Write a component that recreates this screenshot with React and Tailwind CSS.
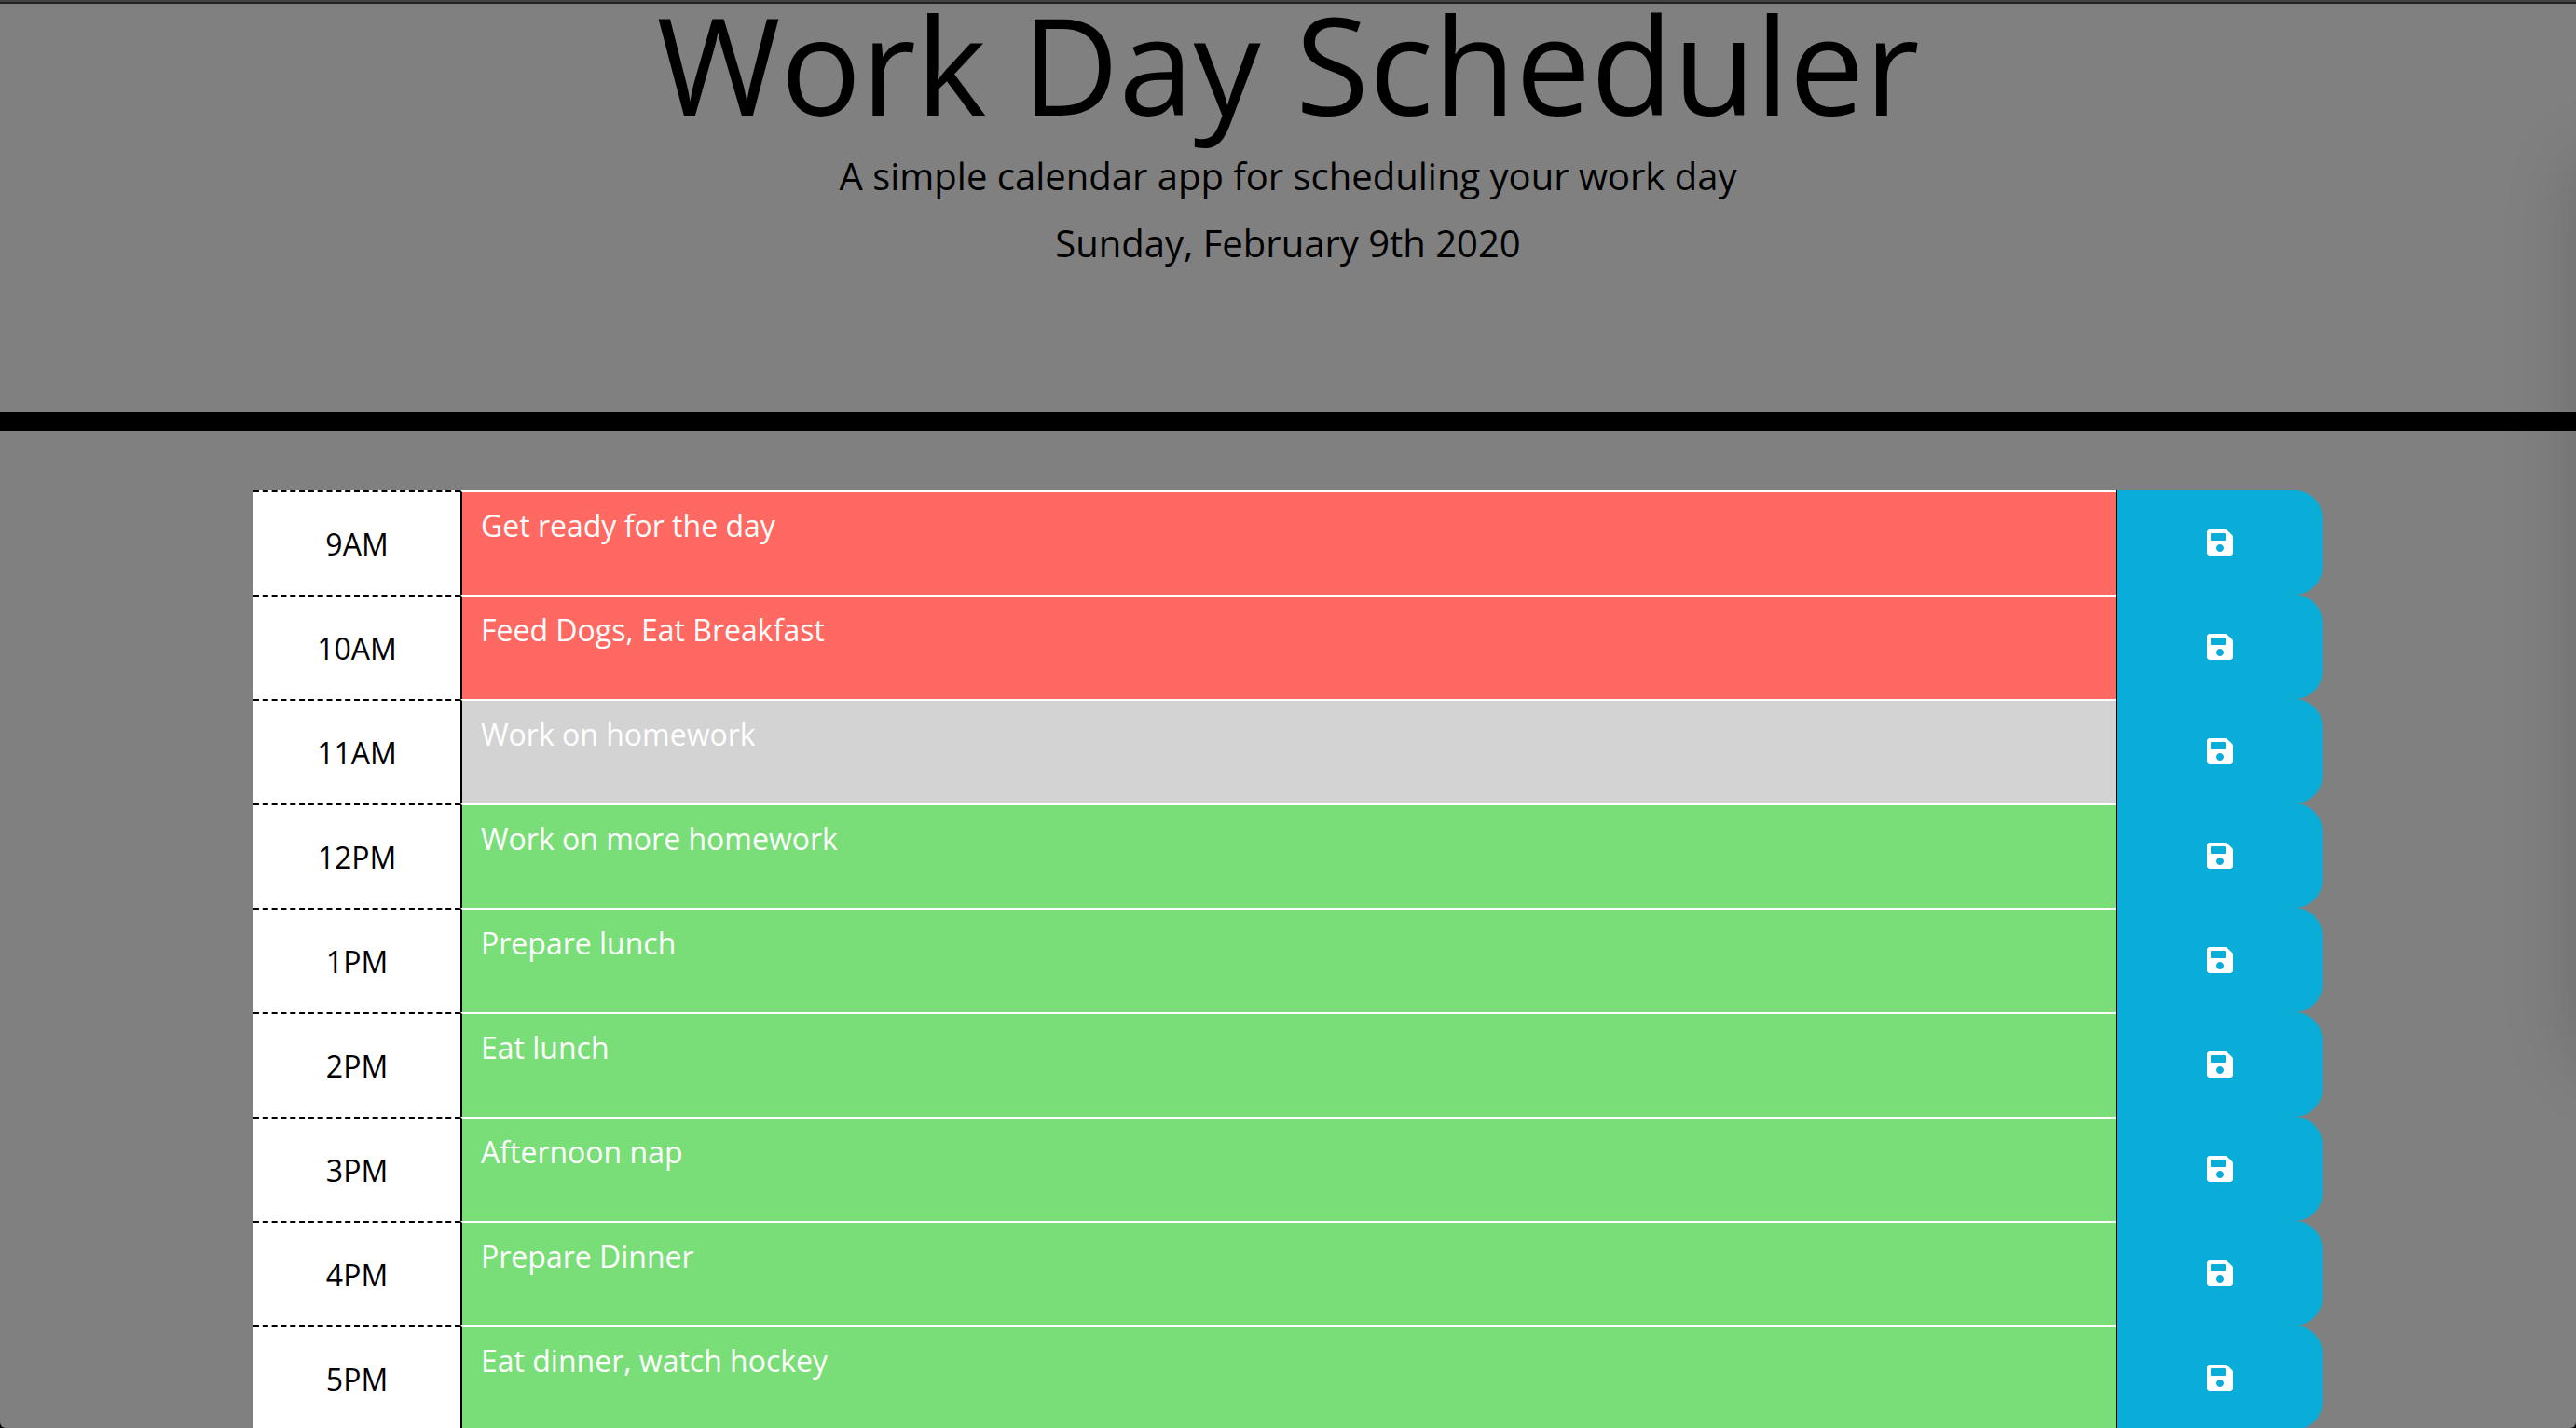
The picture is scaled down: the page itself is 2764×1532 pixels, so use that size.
import { useState } from "react";
import { FaSave } from "react-icons/fa";

const PAST = "bg-[#ff6961]";
const PRESENT = "bg-[#d3d3d3]";
const FUTURE = "bg-[#79de78]";

const HOURS = [
  { hour: "9AM", task: "Get ready for the day", tone: PAST },
  { hour: "10AM", task: "Feed Dogs, Eat Breakfast", tone: PAST },
  { hour: "11AM", task: "Work on homework", tone: PRESENT },
  { hour: "12PM", task: "Work on more homework", tone: FUTURE },
  { hour: "1PM", task: "Prepare lunch", tone: FUTURE },
  { hour: "2PM", task: "Eat lunch", tone: FUTURE },
  { hour: "3PM", task: "Afternoon nap", tone: FUTURE },
  { hour: "4PM", task: "Prepare Dinner", tone: FUTURE },
  { hour: "5PM", task: "Eat dinner, watch hockey", tone: FUTURE },
];

function TimeBlock({ hour, task, tone }) {
  const [text, setText] = useState(task);
  const id = `task-${hour}`;
  return (
    <div className="grid h-28 grid-cols-[1fr_8fr_1fr]">
      <label
        htmlFor={id}
        className="flex items-center justify-center border-t-2 border-dashed border-black bg-white pt-0.5"
      >
        {hour}
      </label>
      <textarea
        id={id}
        value={text}
        onChange={(e) => setText(e.target.value)}
        className={`block h-full w-full resize-none overflow-hidden border-t-2 border-l-2 border-t-white border-l-black px-5 py-3 text-white outline-none ${tone}`}
      />
      <button
        type="button"
        aria-label={`Save ${hour}`}
        className="flex items-center justify-center rounded-r-[30px] border-l-2 border-black bg-[#0aadd8] text-white"
      >
        <FaSave aria-hidden="true" />
      </button>
    </div>
  );
}

export default function App() {
  return (
    <div className="h-screen bg-black">
      <div className="relative h-full overflow-hidden rounded-b-md bg-[#808080] font-['Open_Sans',sans-serif] text-[32px] leading-[48px] text-black">
        <header className="border-b-[20px] border-black pb-[145px] text-center">
          <div className="h-1 border-b-2 border-[#222222] bg-[#444444]" />
          <h1 className="text-[144px] leading-[128px]">Work Day Scheduler</h1>
          <p className="mt-[21px] text-[40px] leading-[72px]">
            A simple calendar app for scheduling your work day
          </p>
          <p className="text-[40px] leading-[72px]">Sunday, February 9th 2020</p>
        </header>

        <main className="mx-auto max-w-[2280px] px-[30px] pt-16">
          {HOURS.map((block) => (
            <TimeBlock key={block.hour} {...block} />
          ))}
        </main>

        {/* Soft shadow cast from beyond the right edge */}
        <div className="pointer-events-none absolute top-[172px] bottom-[394px] left-full w-40 shadow-[0_0_80px_rgba(0,0,0,0.16)]" />
      </div>
    </div>
  );
}
